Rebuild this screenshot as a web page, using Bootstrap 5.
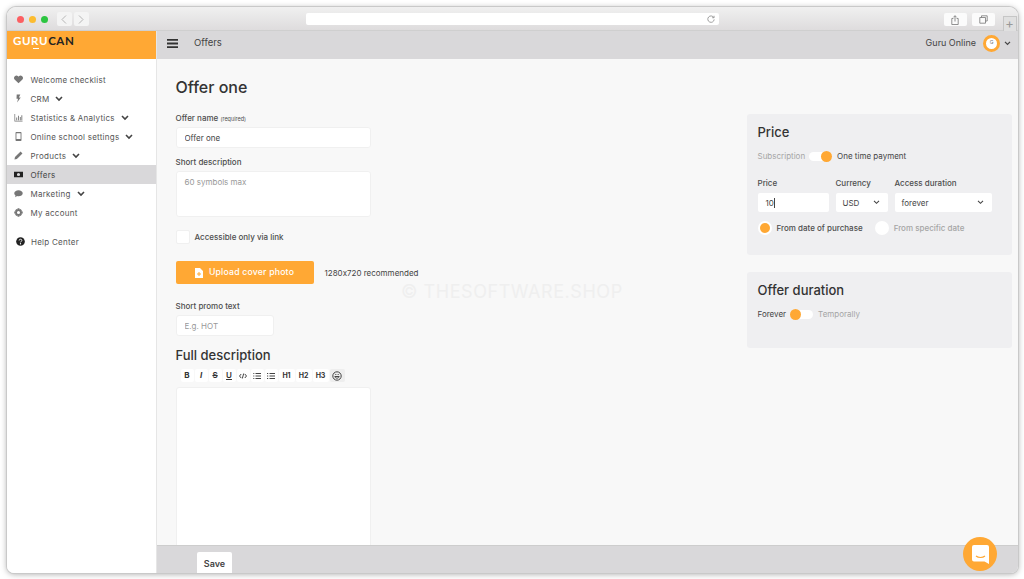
<!DOCTYPE html>
<html lang="en">
<head>
<meta charset="utf-8">
<title>Offers</title>
<link href="https://cdn.jsdelivr.net/npm/bootstrap@5.3.0/dist/css/bootstrap.min.css" rel="stylesheet">
<style>
html,body{height:100%;overflow:hidden}
body{background:#fff;font-family:Inter,"Liberation Sans",sans-serif;color:#444;font-size:8px;padding:7px 6px 6px 7px}
.mac-win{position:relative;height:566px;border-radius:9px 9px 7px 7px;box-shadow:0 0 0 1px #c9c9c9,0 1px 6px rgba(0,0,0,.35);background:#f8f8f8}
.mac-inner{height:100%;border-radius:inherit;overflow:hidden;display:flex;flex-direction:column}
.mac-title{height:24px;flex:none;background:linear-gradient(#f0f0f0,#dedcdd);border-bottom:1px solid #cfcfcf;padding-top:5px}
.dot{width:7px;height:7px;border-radius:50%}
.navb{width:15px;height:14px;background:#f4f4f4;border-radius:2px;margin-top:0}
.urlb{width:413px;height:12px;background:#fff;border-radius:2px;margin-left:217px;padding-right:4px;margin-top:1px}
.tbtn{width:23px;height:13px;background:#fbfbfb;border-radius:2px;margin-top:1px}
.newtab{width:14px;height:15px;border:1px solid #c6c6c6;border-bottom:0;margin-top:4px;margin-left:8px;color:#999;font-size:13px;line-height:13px;text-align:center;background:#e0e0e0}
.mac-body{flex:1;min-height:0;display:flex}
.side{width:150px;flex:none;background:#fff;border-right:1px solid #e6e6e6}
.brand{height:28px;background:#ffa834;padding:3px 0 0 6px;font:700 11.5px/14px Lato,"Liberation Sans",sans-serif;letter-spacing:.6px;position:relative;color:#222}
.brand b{color:#fff;font-weight:700;position:relative}
.brand i{position:absolute;left:26px;top:16.500px;width:6px;height:1.500px;background:#fff}
.menu{margin-top:11px}
.mi{height:19px;padding-left:6.500px;display:flex;align-items:center;color:#555;font-size:8px;letter-spacing:.25px;white-space:nowrap}
.mi.on{background:#d9d8da;color:#444}
.mi svg.ic{width:9px;height:9px;margin-right:8px;flex:none;fill:#777}
.mi.on svg.ic{fill:#222}
.mi svg.cv{width:8px;height:6px;margin-left:6px;fill:none;stroke:#444;stroke-width:1.600}
.mi.help{margin-top:10px;padding-left:9px}
.mi.help svg.ic{fill:#222;margin-right:6px}
.work{flex:1;min-width:0;display:flex;flex-direction:column}
.top{height:28px;flex:none;background:#d9d8da;color:#444;font-size:9.500px;padding:0 7px 4px 10px}
.top .pg{margin-left:16px}
.ava{width:17px;height:17px;border:3px solid #ffa834;background:#fff;border-radius:50%;font-size:5px;color:#777;margin:0 4px 0 7px}
.content{flex:1;min-height:0;overflow:hidden;display:flex;background:#f8f8f8;padding-left:18.500px}
.lcol{width:195px;flex:none;padding-top:18px}
.rcol{width:265px;flex:none;margin-left:376.500px;padding-top:55px}
.ttl{font-size:16px;font-weight:500;line-height:20px;margin:0;color:#333}
.lab{display:block;font-size:8px;font-weight:500;line-height:10px;color:#4d4d4d;margin:0}
.lab small{font-size:5.500px;font-weight:400}
.fld{display:block;width:100%;height:21px;background:#fff;border:1px solid #f0f0f0;border-radius:3px;padding:0 8px;font-size:8px;color:#444;line-height:19px;box-shadow:none;min-height:0}
.fld::placeholder{color:#999;opacity:1}
.fld:focus{border-color:#f0f0f0;box-shadow:none}
textarea.fld{height:46px;padding-top:4px;resize:none;line-height:12px}
.ck{width:14px;height:14px;background:#fff;border:1px solid #f0f0f0;border-radius:2px;margin:0 5px 0 0;flex:none}
.upb{width:138px;height:23px;background:#ffa834;color:#fff;border:0;border-radius:2px;font-size:8.700px;font-weight:500;letter-spacing:.2px;padding:0}
.upb svg{width:8px;height:10px;fill:#fff;margin-right:6px}
.upb:hover{background:#ffa834;color:#fff}
.hint{font-size:8px;margin-left:11px;color:#444;font-feature-settings:"calt" 0}
.h2t{font-size:13px;font-weight:500;line-height:16px;color:#333;margin:11px 0 0}
.tools{margin:6px 0 5px 5px;gap:1px;height:13px}
.tb{min-width:13px;height:13px;background:#fff;border-radius:2px;font-size:8px;line-height:13px;text-align:center;color:#333;font-weight:600;flex:none;padding:0 2px;display:flex;align-items:center;justify-content:center}
.tb.hh{width:16px;font-size:7px;font-weight:700}
.tb svg{width:8px;height:8px;fill:none;stroke:#444;stroke-width:1}
.tb.em{background:#eee;width:15px}
.tb.em svg{width:10px;height:10px}
.editor{height:180px;background:#fff;border:1px solid #f0f0f0;border-radius:3px}
.pan{background:#efeff1;border-radius:3px;padding:9px 10px 0 10.500px}
.pan h3{font-size:13px;font-weight:500;line-height:18px;margin:0;color:#333}
.p1{height:141px}
.p2{height:76px;margin-top:17px;padding-top:9px}
.mut{color:#a5a5a5}
.sw{width:23px;height:9px;background:#fff;border-radius:5px;position:relative;flex:none;margin:0 5px 0 4px}
.sw::after{content:"";position:absolute;top:-1px;width:11px;height:11px;border-radius:50%;background:#ffa834}
.sw.r::after{right:0}.sw.l::after{left:0}
.sel{height:19px;background:#fff;border-radius:2px;font-size:8px;color:#444;padding:0 8px 0 7px}
.sel svg{width:7px;height:5px;fill:none;stroke:#444;stroke-width:1.300}
.radd{width:14px;height:14px;border-radius:50%;background:#fff;position:relative;flex:none}
.radd.on::after{content:"";position:absolute;left:2px;top:2px;width:10px;height:10px;border-radius:50%;background:#ffa834}
.foot{height:28px;flex:none;background:#d9d8da;border-top:1px solid #cdcdcd;padding:6px 0 0 40px}
.savb{width:35px;height:21px;background:#fff;border:0;border-radius:2px 2px 0 0;font-size:9px;font-weight:600;color:#444;padding:3px 0 0}
.savb:hover{background:#fff;color:#444}
.fab{position:absolute;right:21px;bottom:2px;width:34px;height:34px;border-radius:50%;background:#ffa834}
.fab svg{width:17px;height:19px}
.wm{position:absolute;left:394px;top:271px;font-size:18px;color:#efefef;letter-spacing:.55px;white-space:nowrap;pointer-events:none}
</style>
</head>
<body>
<div class="mac-win">
<div class="mac-inner">
  <div class="mac-title d-flex">
    <div class="d-flex" style="gap:5px;margin:3.500px 0 0 9.500px">
      <span class="dot" style="background:#fc5f62"></span><span class="dot" style="background:#fcbc30"></span><span class="dot" style="background:#2cc540"></span>
    </div>
    <div class="d-flex" style="gap:2px;margin-left:9px">
      <span class="navb d-flex align-items-center justify-content-center"><svg width="6" height="9" viewBox="0 0 6 9" fill="none" stroke="#b5b5b5" stroke-width="1"><path d="M5 .5 1 4.500l4 4"/></svg></span>
      <span class="navb d-flex align-items-center justify-content-center"><svg width="6" height="9" viewBox="0 0 6 9" fill="none" stroke="#b5b5b5" stroke-width="1"><path d="M1 .5l4 4-4 4"/></svg></span>
    </div>
    <div class="urlb d-flex align-items-center justify-content-end"><svg width="8" height="8" viewBox="0 0 10 10" fill="none" stroke="#888" stroke-width="1"><path d="M8.500 3.200A4 4 0 1 0 9 5.500M8.800 1v2.400H6.400"/></svg></div>
    <div class="tbtn d-flex align-items-center justify-content-center" style="margin-left:225px"><svg width="8" height="10" viewBox="0 0 8 10" fill="none" stroke="#777" stroke-width=".8"><path d="M2.400 3.500H.8v6h6.400v-6H5.600M4 6.500V.8M2.300 2.400 4 .7l1.700 1.700"/></svg></div>
    <div class="tbtn d-flex align-items-center justify-content-center" style="margin-left:5px"><svg width="9" height="9" viewBox="0 0 9 9" fill="none" stroke="#777" stroke-width=".8"><path d="M2.500 2.500V.8h5.700v5.200H6.500M.8 2.500h5.700v5.700H.8z"/></svg></div>
    <div class="newtab">+</div>
  </div>
  <div class="mac-body">
    <aside class="side">
      <div class="brand"><b>GURU</b>CAN<i></i></div>
      <nav class="menu">
        <div class="mi"><svg class="ic" viewBox="0 0 10 10"><path d="M5 9.300.9 5.200A2.600 2.600 0 0 1 4.600 1.500l.4.500.4-.5a2.600 2.600 0 0 1 3.700 3.700z"/></svg>Welcome checklist</div>
        <div class="mi"><svg class="ic" viewBox="0 0 10 10"><path d="M3 .5h4L5.500 3.800H7.500L3.500 9.500 4.500 5.200H2.800z"/></svg>CRM<svg class="cv" viewBox="0 0 8 6"><path d="M1 1l3 3 3-3"/></svg></div>
        <div class="mi"><svg class="ic" viewBox="0 0 10 10"><path d="M.5 1h.8v7.700h8.200v.8H.5zM2.500 5h1v3h-1zM4.500 3h1v5h-1zM6.500 4.500h1V8h-1zM8.200 2.500h1V8h-1z"/></svg>Statistics &amp; Analytics<svg class="cv" viewBox="0 0 8 6"><path d="M1 1l3 3 3-3"/></svg></div>
        <div class="mi"><svg class="ic" viewBox="0 0 10 10"><path fill-rule="evenodd" d="M2.500 0h5a.8.800 0 0 1 .8.800v8.400a.8.800 0 0 1-.8.800h-5a.8.800 0 0 1-.8-.8V.8a.8.800 0 0 1 .8-.8zm.2 1.300v6.600h4.600V1.300z"/></svg>Online school settings<svg class="cv" viewBox="0 0 8 6"><path d="M1 1l3 3 3-3"/></svg></div>
        <div class="mi"><svg class="ic" viewBox="0 0 10 10"><path d="M7.300.6l2.100 2.100-6.200 6.200L.5 9.500l.6-2.700z"/></svg>Products<svg class="cv" viewBox="0 0 8 6"><path d="M1 1l3 3 3-3"/></svg></div>
        <div class="mi on"><svg class="ic" viewBox="0 0 10 10"><path fill-rule="evenodd" d="M0 2h10v6H0zm5 1.200a1.800 1.800 0 1 0 0 3.600 1.800 1.800 0 0 0 0-3.600z"/></svg>Offers</div>
        <div class="mi"><svg class="ic" viewBox="0 0 10 10"><path d="M5 1.300c2.600 0 4.700 1.500 4.700 3.400S7.600 8.100 5 8.100c-.5 0-1 0-1.500-.2L1.200 9.200l.5-2C.8 6.600.3 5.700.3 4.700.3 2.800 2.400 1.300 5 1.300z"/></svg>Marketing<svg class="cv" viewBox="0 0 8 6"><path d="M1 1l3 3 3-3"/></svg></div>
        <div class="mi"><svg class="ic" viewBox="0 0 10 10"><path fill-rule="evenodd" d="M4 .3h2l.3 1.400 1-.5L8.800 2.700l-.6 1 1.500.3v2l-1.500.3.600 1L7.300 8.800l-1-.5L6 9.700H4l-.3-1.400-1 .5L1.200 7.300l.6-1L.3 6V4l1.500-.3-.6-1L2.700 1.200l1 .5zM5 3.300a1.700 1.700 0 1 0 0 3.400 1.700 1.700 0 0 0 0-3.400z"/></svg>My account</div>
        <div class="mi help"><svg class="ic" viewBox="0 0 10 10"><circle cx="5" cy="5" r="4.800"/><path d="M3.500 3.900C3.500 3 4.100 2.500 5 2.500s1.500.5 1.500 1.300c0 1.200-1.500 1.100-1.500 2.200" fill="none" stroke="#fff" stroke-width="1"/><circle cx="5" cy="7.500" r=".7" fill="#fff"/></svg>Help Center</div>
      </nav>
    </aside>
    <div class="work">
      <header class="top d-flex align-items-center">
        <svg width="11" height="9" viewBox="0 0 11 9" fill="#333"><path d="M0 0h11v1.800H0zM0 3.600h11v1.800H0zM0 7.200h11V9H0z"/></svg>
        <span class="pg">Offers</span>
        <span class="ms-auto" style="font-size:9px">Guru Online</span>
        <span class="ava d-flex align-items-center justify-content-center">G</span>
        <svg width="7" height="5" viewBox="0 0 8 6" fill="none" stroke="#444" stroke-width="1.500"><path d="M1 1l3 3 3-3"/></svg>
      </header>
      <main class="content">
        <div class="lcol">
          <h1 class="ttl">Offer one</h1>
          <label class="lab" style="margin-top:16px">Offer name <small>(required)</small></label>
          <input class="form-control fld" style="margin-top:3px" value="Offer one">
          <label class="lab" style="margin-top:9px">Short description</label>
          <textarea class="form-control fld" style="margin-top:4px" placeholder="60 symbols max"></textarea>
          <div class="d-flex align-items-center" style="margin-top:13px">
            <span class="ck"></span><span class="lab">Accessible only via link</span>
          </div>
          <div class="d-flex align-items-center text-nowrap" style="margin-top:17px">
            <button class="btn upb d-flex align-items-center justify-content-center" style="flex:none">
              <svg viewBox="0 0 8 10"><path fill-rule="evenodd" d="M0 0h5l3 3v7H0zm3.500 4v1.500H2v1h1.500V8h1V6.500H6v-1H4.500V4z"/></svg>Upload cover photo</button>
            <span class="hint">1280x720 recommended</span>
          </div>
          <label class="lab" style="margin-top:17px">Short promo text</label>
          <input class="form-control fld" style="margin-top:4px;width:98px" placeholder="E.g. HOT">
          <h2 class="h2t">Full description</h2>
          <div class="tools d-flex">
            <span class="tb" style="font-weight:700">B</span>
            <span class="tb" style="font-style:italic;font-weight:700">I</span>
            <span class="tb" style="text-decoration:line-through">S</span>
            <span class="tb" style="text-decoration:underline">U</span>
            <span class="tb"><svg viewBox="0 0 8 8"><path d="M2.200 2 .5 4l1.700 2M5.800 2 7.500 4 5.800 6M4.700 1.500 3.300 6.500"/></svg></span>
            <span class="tb"><svg viewBox="0 0 8 8"><path d="M2.500 1.500H8M2.500 4H8M2.500 6.500H8M.3 1.500h1M.3 4h1M.3 6.500h1"/></svg></span>
            <span class="tb"><svg viewBox="0 0 8 8"><path d="M2.500 1.500H8M2.500 4H8M2.500 6.500H8M0 1.500h1.200M0 4h1.200M0 6.500h1.200"/></svg></span>
            <span class="tb hh">H1</span>
            <span class="tb hh">H2</span>
            <span class="tb hh">H3</span>
            <span class="tb em"><svg viewBox="0 0 10 10"><circle cx="5" cy="5" r="4.200" stroke="#444"/><path d="M2.800 5.500c.5 2.200 3.900 2.200 4.400 0zM3.300 3.500h1M5.700 3.500h1"/></svg></span>
          </div>
          <div class="editor"></div>
        </div>
        <div class="rcol">
          <section class="pan p1">
            <h3>Price</h3>
            <div class="d-flex align-items-center" style="margin-top:9px;height:12px"><span class="mut">Subscription</span><span class="sw r"></span><span>One time payment</span></div>
            <div class="d-flex" style="margin-top:16px;gap:7px">
              <div style="width:71px"><span class="lab">Price</span><div class="sel d-flex align-items-center" style="margin-top:5px;padding-left:8px">10<span style="width:1px;height:10px;background:#444"></span></div></div>
              <div style="width:52px"><span class="lab">Currency</span><div class="sel d-flex align-items-center justify-content-between" style="margin-top:5px">USD<svg viewBox="0 0 8 6"><path d="M1 1l3 3 3-3"/></svg></div></div>
              <div style="width:97px"><span class="lab">Access duration</span><div class="sel d-flex align-items-center justify-content-between" style="margin-top:5px">forever<svg viewBox="0 0 8 6"><path d="M1 1l3 3 3-3"/></svg></div></div>
            </div>
            <div class="d-flex align-items-center" style="margin-top:8px;height:15px">
              <span class="radd on"></span><span class="lab" style="margin-left:5px">From date of purchase</span>
              <span class="radd" style="margin-left:12px"></span><span class="mut" style="margin-left:5px;font-weight:500">From specific date</span>
            </div>
          </section>
          <section class="pan p2">
            <h3>Offer duration</h3>
            <div class="d-flex align-items-center" style="margin-top:9px;height:12px"><span>Forever</span><span class="sw l"></span><span class="mut">Temporally</span></div>
          </section>
        </div>
      </main>
      <footer class="foot"><button class="btn savb">Save</button></footer>
    </div>
  </div>
</div>
<span class="wm">© THESOFTWARE.SHOP</span>
<div class="fab d-flex align-items-center justify-content-center"><svg viewBox="0 0 17 19"><path d="M2 0h13a2 2 0 0 1 2 2v17l-4.500-2.500H2a2 2 0 0 1-2-2V2a2 2 0 0 1 2-2z" fill="#fff"/><path d="M4 11c2.500 2 6.500 2 9 0" fill="none" stroke="#ffa834" stroke-width="1.200"/></svg></div>
</div>
<script src="https://cdn.jsdelivr.net/npm/bootstrap@5.3.0/dist/js/bootstrap.bundle.min.js"></script>
</body>
</html>
